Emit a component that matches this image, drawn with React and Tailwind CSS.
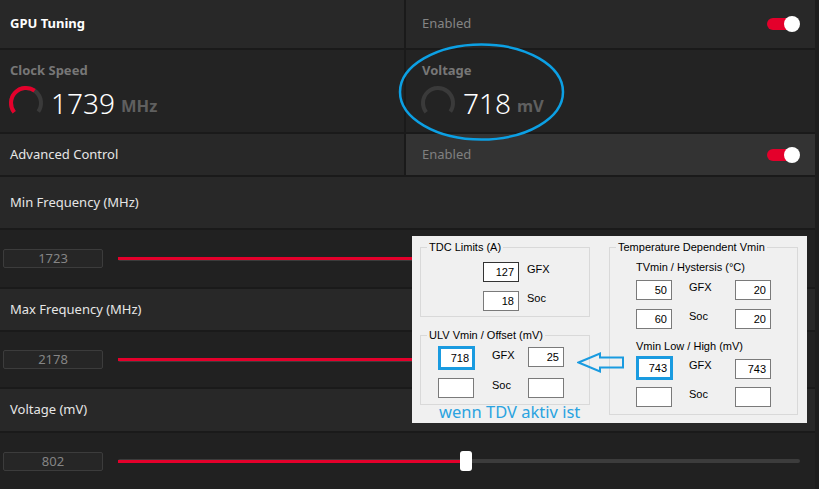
import React from "react";

const F = { fontFamily: '"Noto Sans", "Open Sans", sans-serif' };
const D = { fontFamily: '"Liberation Sans", Arial, sans-serif' };

function pt(cx, cy, r, a) {
  const rad = (a * Math.PI) / 180;
  return [cx + r * Math.sin(rad), cy - r * Math.cos(rad)];
}
function arc(cx, cy, r, a0, a1) {
  const [x0, y0] = pt(cx, cy, r, a0);
  const [x1, y1] = pt(cx, cy, r, a1);
  const large = a1 - a0 > 180 ? 1 : 0;
  return `M ${x0} ${y0} A ${r} ${r} 0 ${large} 1 ${x1} ${y1}`;
}

function Gauge({ fill }) {
  return (
    <svg width="36" height="36" viewBox="0 0 36 36" className="shrink-0">
      <path d={arc(18, 18, 15, 232, 485)} fill="none" stroke="#3a3a3a" strokeWidth="4" />
      {fill ? (
        <path d={arc(18, 18, 15, 232, 232 + fill)} fill="none" stroke="#e4002b" strokeWidth="4" />
      ) : null}
    </svg>
  );
}

function Toggle() {
  return (
    <div className="relative w-[33px] h-[16px] flex items-center">
      <div className="w-[32px] h-[12px] rounded-full bg-[#e4002b]" />
      <div className="absolute right-0 top-0 w-[16px] h-[16px] rounded-full bg-white" />
    </div>
  );
}

function SliderRow({ value, pct, thumb, h }) {
  return (
    <div className={`bg-[#212121] flex items-center ${h}`}>
      <div className="ml-[3px] w-[100px] h-[19px] rounded-[2px] border border-[#3c3c3c] bg-[#262626] text-[#858585] text-[13px] leading-[17px] text-center">
        {value}
      </div>
      <div className="ml-[15px] relative w-[682px] h-[20px] flex items-center">
        <div className="absolute left-0 right-0 h-[4px] rounded-full bg-[#3c3c3c]" />
        <div className="absolute left-0 h-[3px] bg-[#e4002b]" style={{ width: `${pct}px` }} />
        {thumb ? (
          <div className="absolute top-0 w-[12px] h-[20px] rounded-[3px] bg-white" style={{ left: `${pct - 2}px` }} />
        ) : null}
      </div>
    </div>
  );
}

function LabelRow({ text, h }) {
  return (
    <div className={`bg-[#282828] flex items-center pl-[10px] text-[13px] text-[#e6e6e6] ${h}`}>{text}</div>
  );
}

function Box({ v, dark }) {
  return (
    <div
      className={`w-[36px] h-[20px] bg-white border ${dark ? "border-[#333333]" : "border-[#7a7a7a]"} text-right pr-[4px] text-[11px] leading-[18px] text-black shrink-0`}
    >
      {v}
    </div>
  );
}
function BlueBox({ v }) {
  return (
    <div className="w-[37px] h-[24px] bg-white border-[3px] border-[#1a9be0] text-right pr-[3px] text-[11px] leading-[18px] text-black shrink-0">
      {v}
    </div>
  );
}

function Group({ title, className, children }) {
  return (
    <div className={`relative border border-[#d9d9d9] ${className}`}>
      <span className="absolute -top-[8px] left-[6px] px-[2px] bg-[#f0f0f0] text-[11px] leading-[14px] text-black whitespace-nowrap">
        {title}
      </span>
      {children}
    </div>
  );
}

function Lbl({ children, className = "" }) {
  return <div className={`text-[11px] leading-[14px] text-black ${className}`}>{children}</div>;
}

function Dialog() {
  return (
    <div className="absolute left-[412px] top-[236px] w-[395px] h-[187px] bg-[#f0f0f0] flex" style={D}>
      <div className="ml-[8px] mt-[11px] w-[170px] flex flex-col">
        <Group title="TDC Limits (A)" className="h-[70px] pl-[62px] pt-[14px] flex flex-col gap-[9px]">
          <div className="flex items-start">
            <Box v="127" dark />
            <Lbl className="ml-[8px]">GFX</Lbl>
          </div>
          <div className="flex items-start">
            <Box v="18" />
            <Lbl className="ml-[8px]">Soc</Lbl>
          </div>
        </Group>
        <Group title="ULV Vmin / Offset (mV)" className="mt-[18px] h-[70px] pl-[17px] pt-[10px] flex flex-col gap-[8px]">
          <div className="flex items-start">
            <BlueBox v="718" />
            <Lbl className="ml-[17px] w-[36px] mt-[2px]">GFX</Lbl>
            <div className="mt-[1px]">
              <Box v="25" />
            </div>
          </div>
          <div className="flex items-start">
            <Box v="" />
            <Lbl className="ml-[18px] w-[36px] mt-[0px]">Soc</Lbl>
            <Box v="" />
          </div>
        </Group>
        <div className="ml-[19px] -mt-[4px] text-[16.5px] leading-[21px] text-[#2aa3e0]" style={F}>
          wenn TDV aktiv ist
        </div>
      </div>
      <div className="ml-[19px] mt-[11px] w-[189px] h-[168px]">
        <Group title="Temperature Dependent Vmin" className="h-[168px] pl-[26px] pt-[12px] flex flex-col">
          <Lbl>TVmin / Hystersis (°C)</Lbl>
          <div className="mt-[6px] flex flex-col gap-[9px]">
            <div className="flex items-start">
              <Box v="50" />
              <Lbl className="ml-[17px] w-[46px]">GFX</Lbl>
              <Box v="20" />
            </div>
            <div className="flex items-start">
              <Box v="60" />
              <Lbl className="ml-[17px] w-[46px]">Soc</Lbl>
              <Box v="20" />
            </div>
          </div>
          <Lbl className="mt-[10px]">Vmin Low / High (mV)</Lbl>
          <div className="mt-[3px] flex items-start">
            <BlueBox v="743" />
            <Lbl className="ml-[16px] w-[46px] mt-[2px]">GFX</Lbl>
            <div className="mt-[3px]">
              <Box v="743" />
            </div>
          </div>
          <div className="mt-[7px] flex items-start">
            <Box v="" />
            <Lbl className="ml-[17px] w-[46px]">Soc</Lbl>
            <Box v="" />
          </div>
        </Group>
      </div>
      <svg className="absolute left-[165px] top-[116px]" width="50" height="22" viewBox="0 0 50 22">
        <path
          d="M1.5 10.5 L23 1.5 L23 5.5 L46 5.5 L46 15.5 L23 15.5 L23 19.5 Z"
          fill="none"
          stroke="#1a9be0"
          strokeWidth="2"
          strokeLinejoin="miter"
        />
      </svg>
    </div>
  );
}

export default function App() {
  return (
    <div className="relative w-[819px] h-[489px] bg-[#1d1d1d] overflow-hidden" style={F}>
      <div className="w-[815px] h-[489px] flex flex-col gap-[2px] bg-[#1a1a1a]">
        <div className="h-[48px] flex gap-[2px]">
          <div className="w-[404px] bg-[#282828] flex items-center pl-[10px] text-[13px] font-bold text-white">GPU Tuning</div>
          <div className="flex-1 bg-[#282828] flex items-center justify-between pl-[16px] pr-[15px]">
            <span className="text-[13px] text-[#858585]">Enabled</span>
            <Toggle />
          </div>
        </div>
        <div className="h-[82px] flex gap-[2px]">
          <div className="w-[404px] bg-[#232323] pl-[10px] pt-[12px]">
            <div className="text-[13px] leading-[16px] font-bold text-[#777777]">Clock Speed</div>
            <div className="mt-[7px] -ml-[2px] flex items-center">
              <Gauge fill={163} />
              <span className="ml-[7px] text-[28px] leading-[36px] font-light text-white">1739</span>
              <span className="ml-[6px] mt-[6px] text-[16.5px] font-bold text-[#5f5f5f]">MHz</span>
            </div>
          </div>
          <div className="flex-1 bg-[#232323] pl-[16px] pt-[12px]">
            <div className="text-[13px] leading-[16px] font-bold text-[#777777]">Voltage</div>
            <div className="mt-[7px] -ml-[2px] flex items-center">
              <Gauge fill={0} />
              <span className="ml-[7px] text-[28px] leading-[36px] font-light text-white">718</span>
              <span className="ml-[6px] mt-[6px] text-[16.5px] font-bold text-[#5f5f5f]">mV</span>
            </div>
          </div>
        </div>
        <div className="h-[41px] flex gap-[2px]">
          <div className="w-[404px] bg-[#282828] flex items-center pl-[10px] text-[13px] text-[#e6e6e6]">Advanced Control</div>
          <div className="flex-1 bg-[#333333] flex items-center justify-between pl-[16px] pr-[15px]">
            <span className="text-[13px] text-[#808080]">Enabled</span>
            <Toggle />
          </div>
        </div>
        <LabelRow text="Min Frequency (MHz)" h="h-[51px]" />
        <SliderRow value="1723" pct={400} h="h-[57px]" />
        <LabelRow text="Max Frequency (MHz)" h="h-[41px]" />
        <SliderRow value="2178" pct={400} h="h-[55px]" />
        <LabelRow text="Voltage (mV)" h="h-[42px]" />
        <SliderRow value="802" pct={344} thumb h="h-[56px]" />
      </div>

      <svg className="absolute left-[397px] top-[42px] pointer-events-none" width="170" height="100" viewBox="0 0 170 100">
        <ellipse cx="84.5" cy="50" rx="81.5" ry="47.5" fill="none" stroke="#0ca0e4" strokeWidth="2.5" />
      </svg>

      <Dialog />
    </div>
  );
}
